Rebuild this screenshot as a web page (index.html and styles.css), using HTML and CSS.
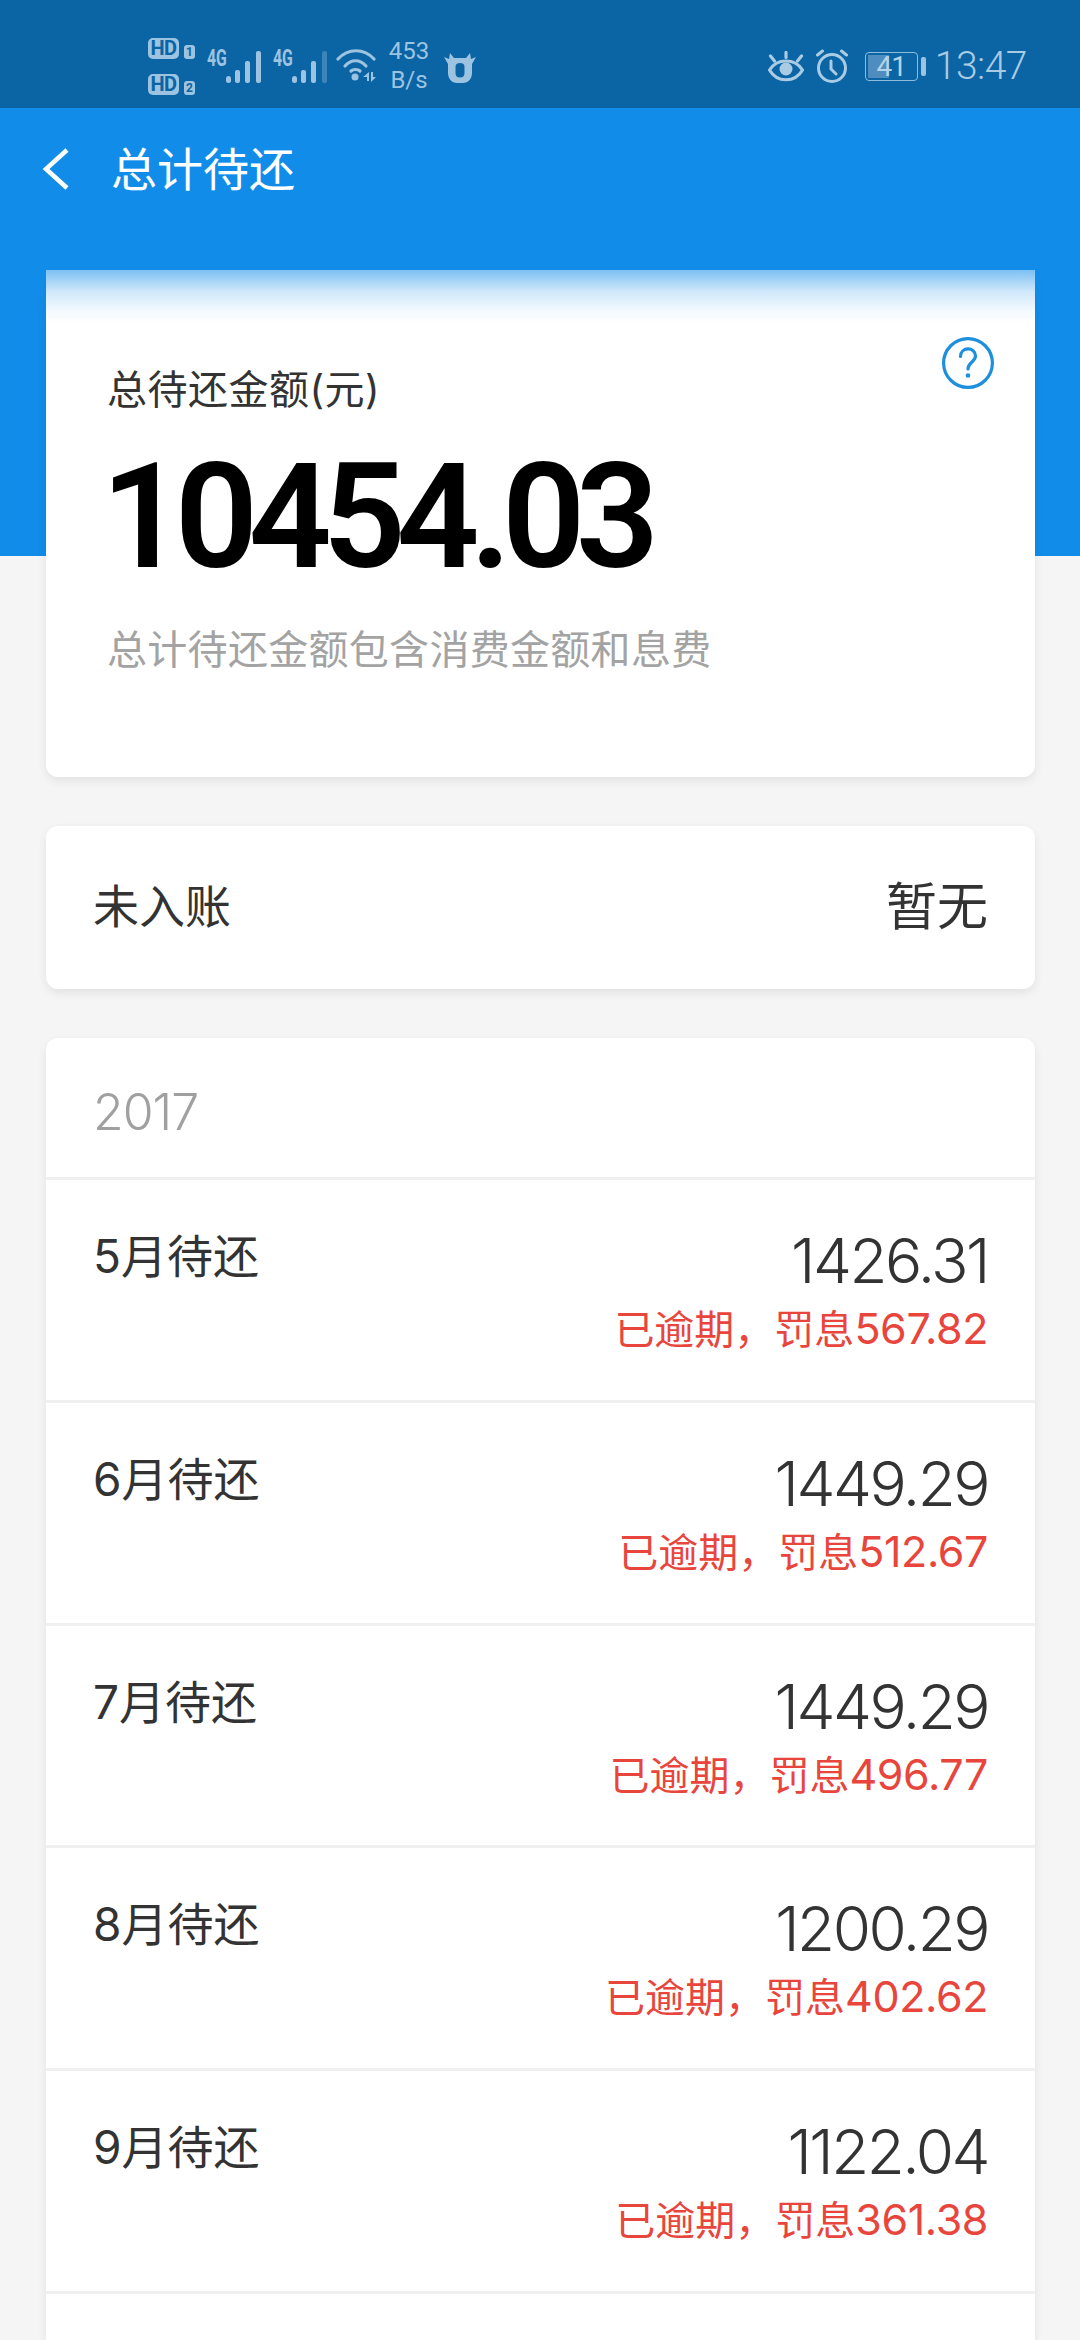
FILE: index.html
```html
<!DOCTYPE html>
<html lang="zh-CN">
<head>
  <meta charset="UTF-8"/>
  <meta name="viewport" content="width=device-width, initial-scale=1.0"/>
  <title>总计待还</title>
  <link rel="stylesheet" href="styles.css">
</head>
<body>
  <div class="status-bar">
    <div class="sim-tags">
      <div class="sim-row"><span class="hd">HD</span><span class="sim-no">1</span></div>
      <div class="sim-row"><span class="hd">HD</span><span class="sim-no">2</span></div>
    </div>
    <div class="signal">
      <span class="net">4G</span>
      <svg width="35" height="35" viewBox="0 0 35 35"><g fill="#9cc3e0"><rect x="0" y="27" width="5" height="7" rx="2.5"/><rect x="9" y="21" width="5" height="13" rx="2"/><rect x="19" y="12" width="5" height="22" rx="2"/><rect x="30" y="2" width="5" height="32" rx="2"/></g></svg>
    </div>
    <div class="signal">
      <span class="net">4G</span>
      <svg width="35" height="35" viewBox="0 0 35 35"><g fill="#9cc3e0"><rect x="0" y="27" width="5" height="7" rx="2.5"/><rect x="9" y="21" width="5" height="13" rx="2"/><rect x="19" y="12" width="5" height="22" rx="2"/><rect x="30" y="2" width="5" height="32" rx="2" opacity=".35"/></g></svg>
    </div>
    <svg class="wifi" width="40" height="34" viewBox="0 0 40 34" fill="none" stroke="#9cc3e0" stroke-width="3.2" stroke-linecap="round">
      <path d="M2 10C12 -1 28 -1 38 10"/>
      <path d="M9 17C15 10 24 10 30 17"/>
      <path d="M15 22C17 20 22 20 24 22"/>
      <circle cx="19" cy="28" r="3.500" fill="#9cc3e0" stroke="none"/>
      <path d="M33 23v9h-2v-4h-4z" fill="#9cc3e0" stroke="none"/>
      <path d="M35 23h2v5h3l-5 5z" fill="#9cc3e0" stroke="none"/>
    </svg>
    <div class="speed"><span>453</span><span>B/s</span></div>
    <svg class="cow" width="32" height="31" viewBox="0 0 32 31"><path fill="#9cc3e0" fill-rule="evenodd" d="M0 5l5 2 1-6 4 5h12l4-5 1 6 5-2-4 7v9c0 6-4 10-9 10h-6c-5 0-9-4-9-10v-9zM16 11c-3 0-4.500 1-4.500 4v6c0 3 1.500 4.500 4.500 4.500s4.500-1.500 4.500-4.500v-6c0-3-1.500-4-4.500-4z"/></svg>
    <div class="status-right">
      <svg width="36" height="31" viewBox="0 0 36 31" fill="none" stroke="#a9cbe3" stroke-width="3.2" stroke-linecap="round">
        <path d="M1.500 19C9 7 27 7 34.500 19C27 32 9 32 1.500 19z"/>
        <circle cx="18" cy="18" r="6.500" fill="#a9cbe3" stroke="none"/>
        <path d="M18 1.500v5M2.500 5l4 5M33.500 5l-4 5"/>
      </svg>
      <svg width="32" height="34" viewBox="0 0 32 34" fill="none" stroke="#a9cbe3" stroke-width="3" stroke-linecap="round">
        <circle cx="16" cy="19" r="13.500"/>
        <path d="M15 12v8l5 5M1.500 6l5-4M30.500 6l-5-4"/>
      </svg>
      <div class="battery"><span class="battery-fill"></span><span class="battery-num">41</span></div>
      <span class="battery-cap"></span>
      <span class="clock">13:47</span>
    </div>
  </div>

  <div class="app-bar">
    <svg width="28" height="42" viewBox="0 0 28 42" fill="none" stroke="#fff" stroke-width="4.500"><path d="M25 2L4 21l21 19"/></svg>
    <h1>总计待还</h1>
  </div>

  <div class="band"></div>

  <main class="content">
    <section class="card total-card">
      <svg class="help" width="52" height="52" viewBox="0 0 52 52" fill="none" stroke="#1e8fdc" stroke-width="3.200">
        <circle cx="26" cy="26" r="24.400"/>
        <path d="M18.500 19.500c0-10 15-10 15-.500 0 6-7.500 6-7.500 13" stroke-linecap="round"/>
        <circle cx="26" cy="38.500" r="2.300" fill="#1e8fdc" stroke="none"/>
      </svg>
      <div class="total-label">总待还金额(元)</div>
      <div class="total-num">10454.03</div>
      <div class="total-hint">总计待还金额包含消费金额和息费</div>
    </section>

    <section class="card pending">
      <span class="pending-label">未入账</span>
      <span class="pending-val">暂无</span>
    </section>

    <section class="card list">
      <div class="year">2017</div>
      <div class="bill">
        <span class="bill-month">5月待还</span>
        <div class="bill-right"><div class="amount">1426.31</div><div class="late">已逾期，罚息<span class="late-num">567.82</span></div></div>
      </div>
      <div class="bill">
        <span class="bill-month">6月待还</span>
        <div class="bill-right"><div class="amount">1449.29</div><div class="late">已逾期，罚息<span class="late-num">512.67</span></div></div>
      </div>
      <div class="bill">
        <span class="bill-month">7月待还</span>
        <div class="bill-right"><div class="amount">1449.29</div><div class="late">已逾期，罚息<span class="late-num">496.77</span></div></div>
      </div>
      <div class="bill">
        <span class="bill-month">8月待还</span>
        <div class="bill-right"><div class="amount">1200.29</div><div class="late">已逾期，罚息<span class="late-num">402.62</span></div></div>
      </div>
      <div class="bill">
        <span class="bill-month">9月待还</span>
        <div class="bill-right"><div class="amount">1122.04</div><div class="late">已逾期，罚息<span class="late-num">361.38</span></div></div>
      </div>
      <div class="bill bill-stub"></div>
    </section>
  </main>
</body>
</html>
```

FILE: styles.css
```css
* {
  box-sizing: border-box;
}

html, body {
  margin: 0;
  height: 2340px;
  overflow: hidden;
}

body {
  font-family: Inter, "Noto Sans CJK SC", sans-serif;
  background: #f5f5f5;
  color: #333;
}

.status-bar {
  height: 108px;
  background: #0b64a4;
  color: #9cc3e0;
  display: flex;
  align-items: center;
  padding: 24px 53px 0 148px;
  font-family: Roboto, sans-serif;
}

.sim-tags {
  display: flex;
  flex-direction: column;
  gap: 15px;
}

.sim-row {
  display: flex;
  align-items: flex-end;
  gap: 5px;
}

.hd {
  width: 31px;
  height: 21px;
  border-radius: 5px;
  background: #9cc3e0;
  color: #0b64a4;
  font-size: 20px;
  line-height: 21px;
  font-weight: 700;
  text-align: center;
  letter-spacing: -.5px;
}

.sim-no {
  width: 11px;
  height: 14px;
  border-radius: 3px;
  background: #9cc3e0;
  color: #0b64a4;
  font-size: 12px;
  line-height: 14px;
  font-weight: 700;
  text-align: center;
}

.signal {
  display: flex;
  align-items: flex-end;
  margin-left: 12px;
  height: 35px;
}

.signal + .signal {
  margin-left: 12px;
}

.net {
  align-self: flex-start;
  font-size: 24px;
  line-height: 18px;
  font-weight: 700;
  width: 19px;
  white-space: nowrap;
  transform: scaleX(.66);
  transform-origin: left;
}

.wifi {
  margin-left: 9px;
}

.speed {
  display: flex;
  flex-direction: column;
  align-items: center;
  margin-left: 13px;
  font-size: 24px;
  line-height: 29px;
  width: 40px;
}

.cow {
  margin-left: 15px;
  margin-top: 2px;
}

.status-right {
  margin-left: auto;
  display: flex;
  align-items: center;
  color: #a9cbe3;
}

.status-right svg + svg {
  margin-left: 12px;
}

.battery {
  position: relative;
  width: 53px;
  height: 29px;
  margin-left: 17px;
  border: 1.5px solid #8fbbdc;
  border-radius: 4px;
  text-align: center;
  font-size: 28px;
  line-height: 27px;
  letter-spacing: -1px;
  color: #b5d3e8;
}

.battery-fill {
  position: absolute;
  left: 2px;
  top: 2px;
  bottom: 2px;
  width: 21px;
  background: #4f8dbe;
}

.battery-num {
  position: relative;
}

.battery-cap {
  width: 5px;
  height: 19px;
  margin-left: 3px;
  background: #9cc3e0;
  border-radius: 2px;
}

.clock {
  margin-left: 9px;
  font-size: 39px;
  font-weight: 300;
  letter-spacing: -.5px;
}

.app-bar {
  position: relative;
  z-index: 2;
  height: 162px;
  background: #118de9;
  color: #fff;
  display: flex;
  align-items: flex-start;
  padding: 40px 0 0 42px;
}

.app-bar h1 {
  margin: -9px 0 0 41px;
  font-size: 46px;
  line-height: 60px;
  font-weight: 400;
}

/* soft shadow falling on the first card */
.app-bar::after {
  content: "";
  position: absolute;
  left: 0;
  right: 0;
  top: 100%;
  height: 54px;
  background: linear-gradient(rgba(17, 141, 233, .55), rgba(17, 141, 233, .2) 40%, rgba(17, 141, 233, .05) 75%, rgba(17, 141, 233, 0));
}

.band {
  height: 286px;
  background: #118de9;
}

.content {
  margin-top: -286px;
  padding: 0 45px 0 46px;
  display: flex;
  flex-direction: column;
  gap: 49px;
  position: relative;
}

.card {
  background: #fff;
  border-radius: 12px;
  box-shadow: 0 4px 10px rgba(0, 0, 0, 0.08);
}

.total-card {
  position: relative;
  height: 507px;
  border-radius: 0 0 12px 12px;
  padding: 88px 61px 0;
}

.help {
  position: absolute;
  top: 67px;
  right: 41px;
}

.total-label {
  font-size: 40px;
  line-height: 64px;
  color: #333;
  letter-spacing: .5px;
}

.total-num {
  font-family: Roboto, sans-serif;
  font-size: 146px;
  line-height: 150px;
  font-weight: 600;
  color: #000;
  letter-spacing: -9.6px;
  margin: 21px 0 0 -6px;
}

.total-hint {
  font-size: 40px;
  line-height: 60px;
  color: #a3a3a3;
  margin-top: 27px;
  letter-spacing: .3px;
}

.pending {
  height: 163px;
  display: flex;
  justify-content: space-between;
  align-items: center;
  padding: 0 47px 10px;
  color: #333;
}

.pending-label {
  font-size: 46px;
}

.pending-val {
  font-size: 51px;
}

.list {
  border-radius: 12px 12px 0 0;
}

.year {
  height: 139px;
  line-height: 148px;
  padding: 0 47px;
  font-size: 50px;
  color: #a0a0a0;
  font-weight: 300;
  letter-spacing: -1px;
}

.bill {
  height: 222.8px;
  border-top: 3px solid #f0f0f0;
  display: flex;
  justify-content: space-between;
  padding: 43px 47px 0;
}

.bill-stub {
  height: 50px;
}

.bill-month {
  font-size: 46px;
  line-height: 66px;
}

.bill-right {
  text-align: right;
}

.amount {
  font-size: 62px;
  line-height: 76px;
  font-weight: 300;
  letter-spacing: -2.5px;
  color: #333;
}

.late {
  font-size: 40px;
  line-height: 58px;
  color: #e8453c;
}

.late-num {
  font-size: 43px;
  letter-spacing: -.4px;
}
```
